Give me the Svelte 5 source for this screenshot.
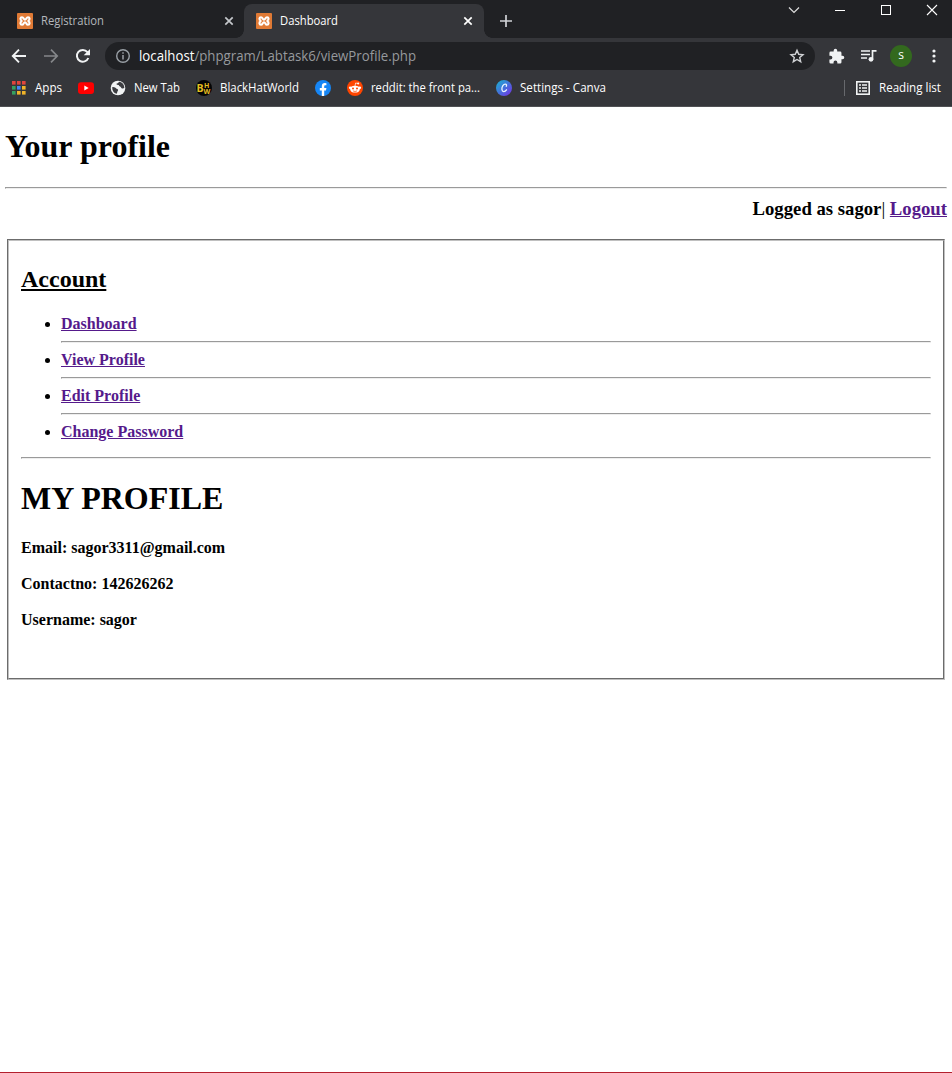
<script>
  const bookmarks = [
    { icon: 'apps', label: 'Apps', width: 27 },
    { icon: 'youtube' },
    { icon: 'globe', label: 'New Tab', width: 46 },
    { icon: 'bhw', label: 'BlackHatWorld', width: 79 },
    { icon: 'facebook' },
    { icon: 'reddit', label: 'reddit: the front pa...', width: 109 },
    { icon: 'canva', label: 'Settings - Canva', width: 86 }
  ];
  const dots = ['#e0453c', '#e0453c', '#e0453c', '#34a060', '#4285f4', '#f0b429', '#34a060', '#f0b429', '#f0b429'];
  const links = ['Dashboard', 'View Profile', 'Edit Profile', 'Change Password'];
  const details = ['Email: sagor3311@gmail.com', 'Contactno: 142626262', 'Username: sagor'];
</script>

{#snippet label(text, width, size = 12)}
  <svg class="label" width={width} height="18"><text x="0" y="13" font-size={size} textLength={width} lengthAdjust="spacingAndGlyphs">{text}</text></svg>
{/snippet}

{#snippet xampp()}
  <svg class="fav" width="16" height="16" viewBox="0 0 16 16">
    <rect width="16" height="16" rx="1" fill="#e07a35" />
    <path d="M5 4.200C3 4.200 3 7 4.500 7.400v1.200C3 9 3 11.800 5 11.800C6.800 11.800 6.500 9.300 8 9.300S9.200 11.800 11 11.800C13 11.800 13 9 11.500 8.600V7.400C13 7 13 4.200 11 4.200C9.200 4.200 9.500 6.700 8 6.700S6.800 4.200 5 4.200Z" fill="none" stroke="#fff" stroke-width="2.100" stroke-linejoin="round" />
  </svg>
{/snippet}

{#snippet close(color)}
  <svg class="close" width="10" height="10" viewBox="0 0 10 10"><path d="M1.300 1.300l7.400 7.400M8.700 1.300l-7.400 7.400" stroke={color} stroke-width="1.700" /></svg>
{/snippet}

<div class="window">
  <header class="strip">
    <div class="tab first">{@render xampp()}<span class="muted">{@render label('Registration', 63)}</span>{@render close('#c5c8cc')}</div>
    <div class="tab active">{@render xampp()}{@render label('Dashboard', 58)}{@render close('#fff')}</div>
    <svg class="plus" width="12" height="12" viewBox="0 0 12 12"><path d="M6 0v12M0 6h12" stroke="#d0d2d6" stroke-width="1.700" /></svg>
    <div class="controls">
      <svg width="12" height="12" viewBox="0 0 12 12"><path d="M1 3.500l5 5 5-5" fill="none" stroke="#ddd" stroke-width="1.200" /></svg>
      <svg width="12" height="12" viewBox="0 0 12 12"><path d="M1 6.500h10" stroke="#fff" /></svg>
      <svg width="12" height="12" viewBox="0 0 12 12"><rect x="1.500" y="1.500" width="9" height="9" fill="none" stroke="#fff" /></svg>
      <svg width="12" height="12" viewBox="0 0 12 12"><path d="M1 1l10 10M11 1L1 11" stroke="#fff" stroke-width="1.100" /></svg>
    </div>
  </header>

  <div class="toolbar">
    <svg width="16" height="16" viewBox="0 0 16 16"><path d="M15 8H2M8 1.700L1.800 8 8 14.300" fill="none" stroke="#f1f3f4" stroke-width="1.900" /></svg>
    <svg width="16" height="16" viewBox="0 0 16 16"><path d="M1 8h13M8 1.700L14.200 8 8 14.300" fill="none" stroke="#85878a" stroke-width="1.700" /></svg>
    <svg width="16" height="16" viewBox="0 0 16 16"><path d="M13.300 10A5.900 5.900 0 1 1 12.400 4.100L14 5.700" fill="none" stroke="#f1f3f4" stroke-width="2" /><path d="M15 1v6.300H8.700z" fill="#f1f3f4" /></svg>
    <div class="address">
      <svg width="16" height="16" viewBox="0 0 16 16"><circle cx="8" cy="8" r="6.300" fill="none" stroke="#9aa0a6" stroke-width="1.400" /><path d="M8 7v4.500M8 4.200v1.600" stroke="#9aa0a6" stroke-width="1.500" /></svg>
      <svg class="url" width="277" height="20"><text x="0" y="15" font-size="14" textLength="277" lengthAdjust="spacingAndGlyphs"><tspan fill="#fff">localhost</tspan><tspan fill="#96999d">/phpgram/Labtask6/viewProfile.php</tspan></text></svg>
      <svg class="star" width="16" height="16" viewBox="0 0 16 16"><path d="M8 2.300l1.700 4 4.300.4-3.300 2.800 1 4.200L8 11.500l-3.700 2.200 1-4.200L2 6.700l4.300-.4z" fill="none" stroke="#d0d2d5" stroke-width="1.400" /></svg>
    </div>
    <div class="actions">
      <svg width="17" height="17" viewBox="0 0 24 24"><path fill="#f1f3f4" d="M20.500 11H19V7a2 2 0 0 0-2-2h-4V3.500a2.500 2.500 0 0 0-5 0V5H4a2 2 0 0 0-2 2v3.800h1.500a2.700 2.700 0 0 1 0 5.400H2V20a2 2 0 0 0 2 2h3.800v-1.500a2.700 2.700 0 0 1 5.400 0V22H17a2 2 0 0 0 2-2v-4h1.500a2.500 2.500 0 0 0 0-5z" /></svg>
      <svg width="17" height="14" viewBox="0 0 17 14"><path d="M1 2h9M1 5.500h9M1 9h6M12.500 10V1.800h4" fill="none" stroke="#f1f3f4" stroke-width="1.700" /><circle cx="11" cy="10.300" r="2.400" fill="#f1f3f4" /></svg>
      <span class="avatar">s</span>
      <svg width="4" height="14" viewBox="0 0 4 14" fill="#f1f3f4"><circle cx="2" cy="2" r="1.600" /><circle cx="2" cy="7" r="1.600" /><circle cx="2" cy="12" r="1.600" /></svg>
    </div>
  </div>

  <nav class="bookmarks">
    {#each bookmarks as b}
      <div class="bookmark">
        <svg width="16" height="16" viewBox="0 0 16 16">
          {#if b.icon === 'apps'}
            {#each dots as color, i}<rect x={1 + (i % 3) * 5} y={1 + Math.floor(i / 3) * 5} width="3.600" height="3.600" fill={color} />{/each}
          {:else if b.icon === 'youtube'}
            <rect y="2.300" width="16" height="11.700" rx="3" fill="#f00" /><path d="M6.300 5.600v5L10.700 8z" fill="#fff" />
          {:else if b.icon === 'globe'}
            <circle cx="8" cy="8" r="7.300" fill="#f1f3f4" />
            <path d="M2.200 7.200c2-.4 3.200.4 4.300 1.600 1.300.2 2 .8 1.400 2-.9.600-.4 2.500-1.400 3C3.800 13 2 10.500 2.200 7.200zM9 1.700c-.3 1.400-1.600 1.600-2.600 2 .1 1.300 1.500 1.100 2.300 1.400.5 1.500 2.200 1.600 2.600 2.800 1 .9 2 .8 3 .2C14.500 5 12.500 2 9 1.700z" fill="#3c3d41" />
          {:else if b.icon === 'bhw'}
            <circle cx="8" cy="8" r="8" fill="#050505" />
            <g fill="#e5bd20" font-weight="bold"><text x="0.500" y="12" font-size="10.500">B</text><text x="8" y="7.500" font-size="7">H</text><text x="7.500" y="14" font-size="7">W</text></g>
          {:else if b.icon === 'facebook'}
            <circle cx="8" cy="8" r="8" fill="#1686f5" /><path d="M6.800 16v-5.600h-2V8h2V6.300c0-2.100 1.200-3.200 3-3.200l1.600.1v2h-.9c-1 0-1.300.6-1.300 1.200V8h2.200l-.4 2.400H9.200V16z" fill="#fff" />
          {:else if b.icon === 'reddit'}
            <circle cx="8" cy="8" r="8" fill="#ff4500" /><ellipse cx="8" cy="9.200" rx="4.700" ry="3.400" fill="#fff" /><circle cx="3.200" cy="7.800" r="1.300" fill="#fff" /><circle cx="12.800" cy="7.800" r="1.300" fill="#fff" /><circle cx="11.200" cy="3.500" r="1" fill="#fff" /><path d="M8 6l.6-3 2.600.5" fill="none" stroke="#fff" stroke-width=".7" /><circle cx="6" cy="8.600" r="1" fill="#ff4500" /><circle cx="10" cy="8.600" r="1" fill="#ff4500" /><path d="M5.900 10.900q2.100 1.200 4.200 0" stroke="#ff4500" stroke-width=".7" fill="none" />
          {:else}
            <defs><linearGradient id="canva" x1="0" y1="0" x2="1" y2="1"><stop offset="0" stop-color="#16b5cf" /><stop offset=".55" stop-color="#496bdd" /><stop offset="1" stop-color="#7b2be8" /></linearGradient></defs>
            <circle cx="8" cy="8" r="8" fill="url(#canva)" /><path d="M10.300 6.300c.6-1.200.1-2.200-1-2.200-2 0-3.700 3-3.400 5.300.3 2.800 3 2.800 4.600.4" fill="none" stroke="#e8f4ff" stroke-width="1.300" stroke-linecap="round" />
          {/if}
        </svg>
        {#if b.label}{@render label(b.label, b.width)}{/if}
      </div>
    {/each}
    <div class="reading">
      <svg width="14" height="14" viewBox="0 0 14 14"><rect x=".8" y=".8" width="12.400" height="12.400" fill="none" stroke="#f1f3f4" stroke-width="1.600" /><path d="M3 4h2M6 4h5M3 7h2M6 7h5M3 10h2M6 10h5" stroke="#f1f3f4" stroke-width="1.500" /></svg>
      {@render label('Reading list', 62)}
    </div>
  </nav>

  <main>
    <h1>Your profile</h1>
    <hr />
    <p class="session"><b>Logged as sagor</b>| <a href="#logout"><b>Logout</b></a></p>
    <fieldset>
      <h2>Account</h2>
      <ul>
        {#each links as link, i}
          <li><a href="#page">{link}</a>{#if i < links.length - 1}<hr />{/if}</li>
        {/each}
      </ul>
      <hr />
      <h1>MY PROFILE</h1>
      {#each details as line}<p class="detail">{line}</p>{/each}
    </fieldset>
  </main>
</div>

<style>
  :global(body) { margin: 0; background: #fff; }
  * { box-sizing: border-box; }
  svg { display: block; flex: none; }
  .window { width: 952px; height: 1073px; display: flex; flex-direction: column; border-bottom: 1px solid #b3202e; overflow: hidden; font-family: "Liberation Serif", serif; color: #000; }
  .strip, .toolbar, .bookmarks { font-family: "Open Sans", "Noto Sans", sans-serif; display: flex; flex: none; }
  .label, .url { overflow: visible; fill: #fff; }
  .muted .label { fill: #b4b8bd; }
  .strip { height: 38px; background: #202124; padding: 4px 0 0 4px; }
  .tab { width: 240px; height: 34px; display: flex; align-items: center; padding: 0 11px 0 13px; gap: 8px; }
  .tab.first { padding-right: 10px; }
  .tab .close { margin-left: auto; }
  .active { position: relative; padding-left: 12px; background: #35363a; border-radius: 8px 8px 0 0; }
  .active::before, .active::after { content: ""; position: absolute; bottom: 0; width: 8px; height: 8px; }
  .active::before { left: -8px; background: radial-gradient(circle at 0 0, transparent 7.500px, #35363a 8px); }
  .active::after { right: -8px; background: radial-gradient(circle at 100% 0, transparent 7.500px, #35363a 8px); }
  .plus { margin: 11px 0 0 16px; }
  .controls { display: flex; gap: 34px; margin-left: auto; padding-right: 14px; }
  .toolbar { height: 37px; background: #35363a; align-items: center; padding: 0 0 1px 11px; gap: 16px; }
  .address { width: 710px; height: 28px; margin-left: -2px; border-radius: 14px; background: #202124; display: flex; align-items: center; padding: 0 10px; }
  .url { margin-left: 8px; }
  .star { margin-left: auto; }
  .actions { display: flex; align-items: center; margin-left: -3px; }
  .actions svg:nth-child(1) { margin-right: 15px; }
  .avatar { width: 22px; height: 22px; margin: 0 20px 0 13px; border-radius: 50%; background: #33691e; color: #fff; font-size: 12px; line-height: 20px; text-align: center; }
  .bookmarks { height: 32px; background: #35363a; border-bottom: 1px solid #505154; padding: 0 11px 6px; align-items: center; gap: 16px; }
  .bookmark { display: flex; align-items: center; gap: 8px; }
  .bookmark:nth-child(5) { margin-left: 1px; }
  .bookmark:nth-child(4) .label { width: 78px; }
  .reading { display: flex; align-items: center; gap: 9px; margin-left: auto; border-left: 1px solid #67696d; height: 16px; padding-left: 11px; }
  main { padding: 21px 5px 0; }
  h1 { margin: 0; font-size: 32px; line-height: 36px; }
  hr { margin: 0; border: 1px solid; border-color: #9a9a9a #eee #eee #9a9a9a; height: 2px; }
  main > hr { margin-top: 23px; }
  .session { margin: 10px 0 20px; text-align: right; font-size: 18.720px; line-height: 20px; }
  a { color: #551a8b; text-decoration: underline; }
  fieldset { margin: 0 2px; height: 441px; border: 2px groove #c0c0c0; padding: 25px 12px 0; }
  h2 { margin: 0; font-size: 24px; line-height: 27px; text-decoration: underline; }
  ul { margin: 22px 0 16px; padding-left: 40px; font-size: 16px; line-height: 18px; }
  li { font-weight: bold; }
  li hr { margin: 8px 0; }
  fieldset h1 { margin: 21px 0 23px; }
  .detail { margin: 0 0 18px; font-size: 16px; line-height: 18px; font-weight: bold; }
</style>
